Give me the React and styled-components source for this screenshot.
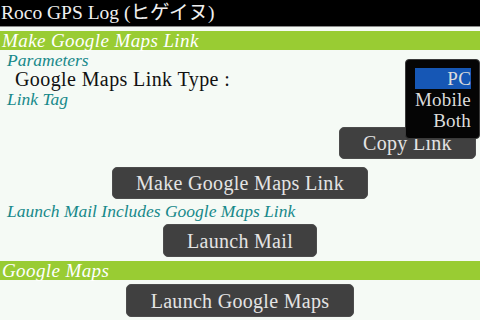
import React from 'react';
import styled, { createGlobalStyle } from 'styled-components';

const GlobalStyle = createGlobalStyle`
  html, body {
    margin: 0;
    padding: 0;
    background: #f5faf5;
  }
  body {
    width: 480px;
    height: 320px;
    overflow: hidden;
    font-family: 'Liberation Serif', 'Noto Sans CJK JP', serif;
  }
`;

const Screen = styled.div`
  width: 480px;
  height: 320px;
  display: flex;
  flex-direction: column;
  background: #f5faf5;
  overflow: hidden;
  font-family: 'Liberation Serif', 'Noto Sans CJK JP', serif;
`;

const TitleBar = styled.div`
  height: 26px;
  background: #000;
  border-bottom: 1px solid #8a8a8a;
  color: #f0f0f0;
  font-size: 19.5px;
  line-height: 26px;
  padding-left: 1px;
  white-space: nowrap;
`;

const SectionBar = styled.div`
  height: 19px;
  margin-top: ${(props) => props.$top || 0}px;
  background: #99cc33;
  color: #fff;
  font-style: italic;
  font-size: 19px;
  letter-spacing: 0.4px;
  line-height: 19px;
  padding-left: 2px;
  white-space: nowrap;
`;

const Label = styled.div`
  color: #17898a;
  font-style: italic;
  font-size: 17.5px;
  line-height: ${(props) => props.$h || 19}px;
  height: ${(props) => props.$h || 19}px;
  padding-left: 7px;
  margin-top: ${(props) => props.$top || 0}px;
  white-space: nowrap;
`;

const FieldRow = styled.div`
  position: relative;
  height: 20px;
  display: flex;
  align-items: center;
  padding-left: 15px;
  color: #111;
  font-size: 20px;
  line-height: 20px;
  letter-spacing: 0.4px;
  white-space: nowrap;
`;

const Popup = styled.div`
  position: absolute;
  right: 0;
  top: -10px;
  width: 64px;
  padding: 8px 8px 7px 1px;
  background: #050505;
  border: 1px solid #3a3a3a;
  border-radius: 4px;
  z-index: 2;
  display: flex;
  flex-direction: column;
  align-items: stretch;
`;

const Option = styled.div`
  height: 21px;
  line-height: 21px;
  text-align: right;
  font-size: 19px;
  letter-spacing: 0.2px;
  color: #dcdcdc;
  margin-left: ${(props) => (props.$active ? '8px' : '0')};
  background: ${(props) => (props.$active ? '#1657b5' : 'transparent')};
`;

const ButtonRow = styled.div`
  display: flex;
  justify-content: ${(props) => props.$align || 'center'};
  padding-right: ${(props) => (props.$align === 'flex-end' ? '4px' : '0')};
  margin-top: ${(props) => props.$top || 0}px;
`;

const Button = styled.div`
  width: ${(props) => props.$w}px;
  height: ${(props) => props.$h || 32}px;
  box-sizing: border-box;
  background: #404040;
  border: 1px solid #4c4c4c;
  border-radius: 5px;
  color: #e4e4e4;
  font-size: 20px;
  letter-spacing: 0.3px;
  line-height: ${(props) => (props.$h || 32) - 1}px;
  text-align: center;
  white-space: nowrap;
`;

export default function App() {
  return (
    <Screen>
      <GlobalStyle />
      <TitleBar>Roco GPS Log (ヒゲイヌ)</TitleBar>
      <SectionBar $top={4}>Make Google Maps Link</SectionBar>
      <Label $top={2} $h={17}>Parameters</Label>
      <FieldRow>
        Google Maps Link Type :
        <Popup>
          <Option $active>PC</Option>
          <Option>Mobile</Option>
          <Option>Both</Option>
        </Popup>
      </FieldRow>
      <Label $top={1}>Link Tag</Label>
      <ButtonRow $align="flex-end" $top={18}>
        <Button $w={137}>Copy Link</Button>
      </ButtonRow>
      <ButtonRow $top={8}>
        <Button $w={256}>Make Google Maps Link</Button>
      </ButtonRow>
      <Label $top={3}>Launch Mail Includes Google Maps Link</Label>
      <ButtonRow $top={3}>
        <Button $w={154} $h={33}>Launch Mail</Button>
      </ButtonRow>
      <SectionBar $top={4}>Google Maps</SectionBar>
      <ButtonRow $top={4}>
        <Button $w={228} $h={33}>Launch Google Maps</Button>
      </ButtonRow>
    </Screen>
  );
}
